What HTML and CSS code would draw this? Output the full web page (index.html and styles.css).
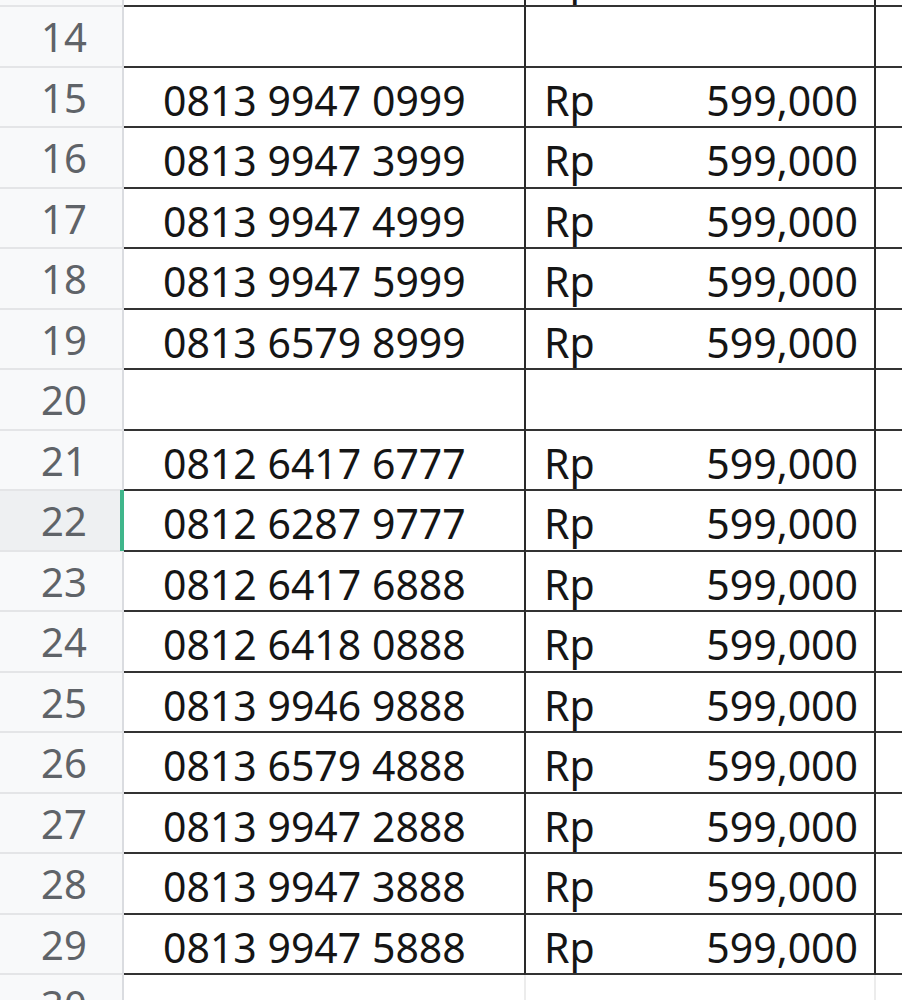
FILE: index.html
```html
<!DOCTYPE html>
<html>
<head>
<meta charset="utf-8">
<link rel="stylesheet" href="styles.css">
</head>
<body>
<div class="sheet">
  <div class="row"><div class="hd">13</div><div class="c num">0813 9946 0999</div><div class="c price"><span>Rp</span><span>599,000</span></div><div class="c d"></div></div>
  <div class="row"><div class="hd">14</div><div class="c num"></div><div class="c price"></div><div class="c d"></div></div>
  <div class="row"><div class="hd">15</div><div class="c num">0813 9947 0999</div><div class="c price"><span>Rp</span><span>599,000</span></div><div class="c d"></div></div>
  <div class="row"><div class="hd">16</div><div class="c num">0813 9947 3999</div><div class="c price"><span>Rp</span><span>599,000</span></div><div class="c d"></div></div>
  <div class="row"><div class="hd">17</div><div class="c num">0813 9947 4999</div><div class="c price"><span>Rp</span><span>599,000</span></div><div class="c d"></div></div>
  <div class="row"><div class="hd">18</div><div class="c num">0813 9947 5999</div><div class="c price"><span>Rp</span><span>599,000</span></div><div class="c d"></div></div>
  <div class="row"><div class="hd">19</div><div class="c num">0813 6579 8999</div><div class="c price"><span>Rp</span><span>599,000</span></div><div class="c d"></div></div>
  <div class="row"><div class="hd">20</div><div class="c num"></div><div class="c price"></div><div class="c d"></div></div>
  <div class="row"><div class="hd">21</div><div class="c num">0812 6417 6777</div><div class="c price"><span>Rp</span><span>599,000</span></div><div class="c d"></div></div>
  <div class="row"><div class="hd sel">22</div><div class="c num">0812 6287 9777</div><div class="c price"><span>Rp</span><span>599,000</span></div><div class="c d"></div></div>
  <div class="row"><div class="hd">23</div><div class="c num">0812 6417 6888</div><div class="c price"><span>Rp</span><span>599,000</span></div><div class="c d"></div></div>
  <div class="row"><div class="hd">24</div><div class="c num">0812 6418 0888</div><div class="c price"><span>Rp</span><span>599,000</span></div><div class="c d"></div></div>
  <div class="row"><div class="hd">25</div><div class="c num">0813 9946 9888</div><div class="c price"><span>Rp</span><span>599,000</span></div><div class="c d"></div></div>
  <div class="row"><div class="hd">26</div><div class="c num">0813 6579 4888</div><div class="c price"><span>Rp</span><span>599,000</span></div><div class="c d"></div></div>
  <div class="row"><div class="hd">27</div><div class="c num">0813 9947 2888</div><div class="c price"><span>Rp</span><span>599,000</span></div><div class="c d"></div></div>
  <div class="row"><div class="hd">28</div><div class="c num">0813 9947 3888</div><div class="c price"><span>Rp</span><span>599,000</span></div><div class="c d"></div></div>
  <div class="row"><div class="hd">29</div><div class="c num">0813 9947 5888</div><div class="c price"><span>Rp</span><span>599,000</span></div><div class="c d"></div></div>
  <div class="row empty"><div class="hd">30</div><div class="c num"></div><div class="c price"></div><div class="c d"></div></div>
</div>
</body>
</html>
```
FILE: styles.css
```css
html, body {
  margin: 0;
  padding: 0;
  background: #ffffff;
  overflow: hidden;
}
.sheet {
  margin-top: -53.5px;
  font-family: "Noto Sans", "Open Sans", sans-serif;
}
.row {
  display: grid;
  grid-template-columns: 124px 400px 352px 1fr;
  height: 60.5px;
}
.row > div {
  box-sizing: border-box;
  height: 60.5px;
}
.hd {
  position: relative;
  background: #f8f9fa;
  border-bottom: 2px solid #e4e5e7;
  border-right: 2px solid #dadce0;
  color: #5f6368;
  font-size: 40px;
  line-height: 56px;
  padding-top: 2px;
  padding-left: 6px;
  text-align: center;
}
.hd.sel {
  background: #eef0f2;
}
.hd.sel::after {
  content: "";
  position: absolute;
  right: -2px;
  top: -1px;
  bottom: -1px;
  width: 4px;
  background: #3fb68b;
}
.c {
  border-bottom: 2px solid #333333;
  color: #151515;
  font-size: 41px;
  line-height: 56px;
  padding-top: 4px;
  white-space: nowrap;
}
.num {
  padding-left: 39px;
}
.price {
  border-left: 2px solid #2a2a2a;
  border-right: 2px solid #2a2a2a;
  display: flex;
  justify-content: space-between;
  padding-left: 18px;
  padding-right: 16px;
}
.empty .c {
  border-bottom: 2px solid #ececec;
}
.empty .price {
  border-left: 2px solid #ececec;
  border-right: 2px solid #ececec;
}
```
